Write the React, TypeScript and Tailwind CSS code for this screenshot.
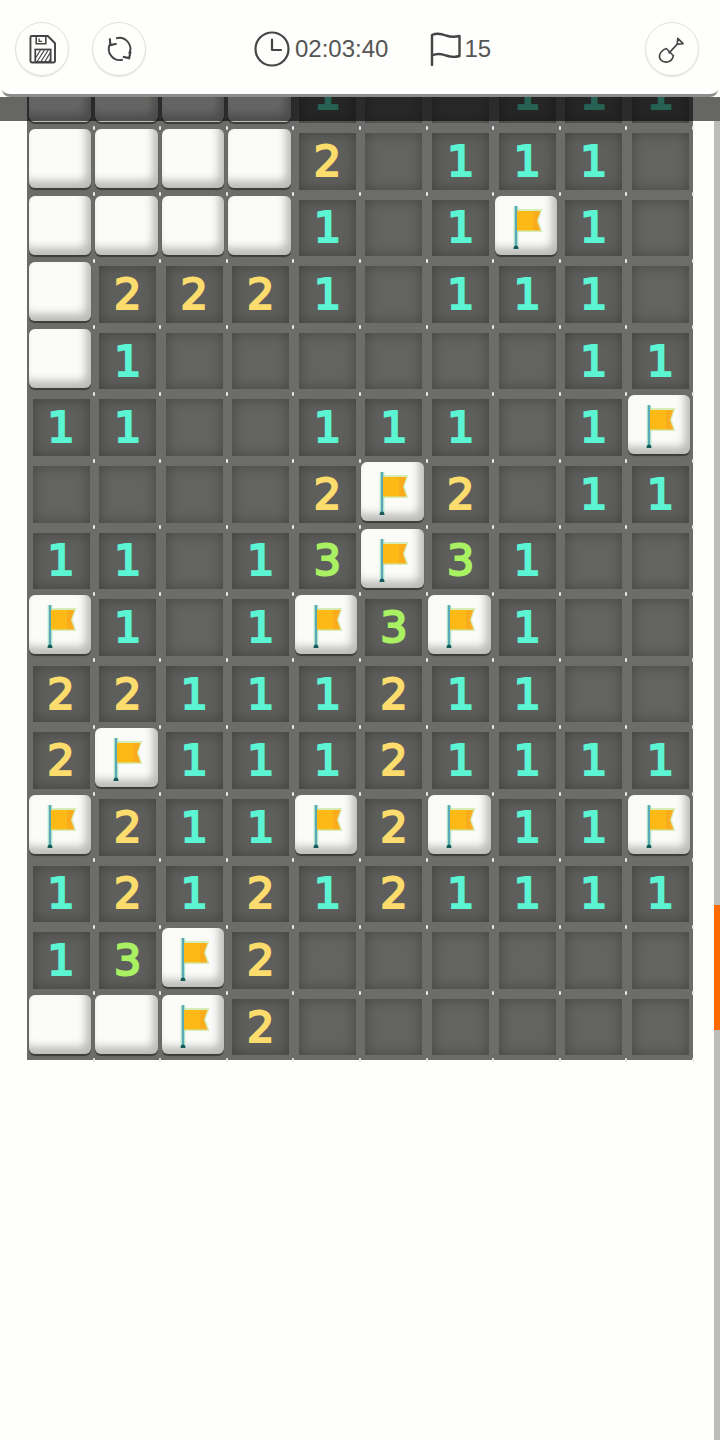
const board = [
  "WWWW1..111",
  "WWWW2.111.",
  "WWWW1.1F1.",
  "W2221.111.",
  "W1......11",
  "11..111.1F",
  "....2F2.11",
  "11.13F31..",
  "F1.1F3F1..",
  "22111211..",
  "2F11121111",
  "F211F2F11F",
  "1212121111",
  "13F2......",
  "WWF2......",
];

function Flag() {
  return (
    <svg width="62" height="62" viewBox="0 0 62 62" className="block">
      <path d="M21 14h25l-3.500 10.500 3.500 10.500H21z" fill="none" stroke="#cdeaa6" strokeWidth="2" opacity="0.8" />
      <line x1="21" y1="10" x2="21" y2="53" stroke="#b6ecc6" strokeWidth="5" opacity="0.7" />
      <line x1="21" y1="10" x2="21" y2="53" stroke="#5aa8b4" strokeWidth="2.400" />
      <path d="M22 15h16v19.500H22z" fill="#fdba16" />
      <path d="M38 15h7.500l-3.500 9.750 3.500 9.750H38z" fill="#f9ac1c" />
      <path d="M18.500 53c0-2.500 1-3.500 2.500-3.500s2.500 1 2.500 3.500z" fill="#175a5a" />
    </svg>
  );
}

function Cell({ v }: { v: string }) {
  const isTile = v === "W" || v === "F";
  const color =
    v === "1" ? "text-[#5cf5d3]" : v === "2" ? "text-[#fbdc6c]" : "text-[#a9f163]";
  return (
    <div className="relative">
      {isTile ? (
        <div className="absolute top-[1.5px] left-[1.5px] w-[62.5px] h-[59px] rounded-[6px] bg-[#fbfbf9] shadow-[inset_-5px_-7px_9px_rgba(0,0,0,0.26),0_2px_1px_rgba(0,0,0,0.45)] overflow-hidden">
          {v === "F" && <Flag />}
        </div>
      ) : v === "." ? (
        <div className="absolute top-[5.5px] left-[5.5px] w-[57px] h-[56.5px] bg-[#636362] shadow-[inset_0_0_14px_rgba(0,0,0,0.3)]" />
      ) : (
        <div className="absolute top-[5.5px] left-[5.5px] w-[57px] h-[56.5px] flex items-center justify-center bg-[#5e5e5d] shadow-[inset_0_0_14px_rgba(0,0,0,0.32)]">
          <span
            className={`font-['DejaVu_Sans',sans-serif] text-[43px] leading-none [-webkit-text-stroke:2.2px_currentColor] ${color}`}
          >
            {v}
          </span>
        </div>
      )}
      <span className="absolute -right-[1px] -bottom-[2px] w-[2px] h-[4px] bg-[#e8e8e8] rounded-full z-[1]" />
    </div>
  );
}

export default function App() {
  return (
    <div className="relative h-[1440px] w-[720px] overflow-hidden bg-[#fefefc] font-['Liberation_Sans',sans-serif]">
      <header className="relative z-20 mx-[2px] h-[97px] flex items-center pt-[3px] bg-[#fefefc] rounded-b-[8px] border-b-[3px] border-[#8c8c8c] text-[#555555]">
        <div className="ml-[13px] flex gap-[23px]">
          <button className="w-[54px] h-[54px] rounded-full border border-[#e0e0de] shadow-[0_1px_1px_rgba(0,0,0,0.12)] flex items-center justify-center">
            <svg width="54" height="54" viewBox="0 0 54 54" fill="none" stroke="#444" strokeWidth="1.6">
              <path d="M15 15a1.500 1.500 0 0 1 1.500-1.500H33l7.500 7.500v18.500a1.500 1.500 0 0 1-1.500 1.500H16.500a1.500 1.500 0 0 1-1.500-1.500z" strokeWidth="2" />
              <path d="M21 14v7.500h10V14" />
              <path d="M24 16v3h3" strokeWidth="1.300" />
              <rect x="20" y="27.500" width="16" height="13" strokeWidth="1.800" />
              <path d="M20.500 36l5-8M22 40l7.500-12M26 40l7.500-12M30 40l5.500-9M34 40l2-3" strokeWidth="1.200" />
            </svg>
          </button>
          <button className="w-[54px] h-[54px] rounded-full border border-[#e0e0de] shadow-[0_1px_1px_rgba(0,0,0,0.12)] flex items-center justify-center">
            <svg width="54" height="54" viewBox="0 0 54 54" fill="none" stroke="#444" strokeWidth="2">
              <path d="M17.500 22A11.500 11.500 0 0 0 31 38" />
              <path d="M24 15.800A11.500 11.500 0 0 1 37.500 32" />
              <path d="M17.500 16l.5 7 6.500-1.500" strokeWidth="2.200" />
              <path d="M39 29.500l-1.500 7-6.500-1.500" strokeWidth="2.200" />
            </svg>
          </button>
        </div>
        <div className="ml-[108px] flex items-center">
          <svg width="36" height="36" viewBox="0 0 36 36" fill="none" stroke="#444" strokeWidth="2.200" strokeLinecap="round" strokeLinejoin="round">
            <circle cx="18" cy="18" r="16.500" />
            <path d="M18 8.500V19h9" />
          </svg>
          <span className="ml-[5px] text-[24px] leading-none">02:03:40</span>
          <svg className="ml-[42px]" width="32" height="34" viewBox="0 0 32 34" fill="none" stroke="#444" strokeWidth="2.400" strokeLinecap="round" strokeLinejoin="round">
            <path d="M2 33V3c5-2.500 9-1.500 14 .5 4.500 1.500 8 2 13.500.5v20c-5 1.500-9 1-13.500-.5-5-2-9-2.500-14 0" />
          </svg>
          <span className="ml-[2px] text-[24px] leading-none">15</span>
        </div>
        <button className="ml-auto mr-[19px] w-[54px] h-[54px] rounded-full border border-[#e0e0de] shadow-[0_1px_1px_rgba(0,0,0,0.12)] flex items-center justify-center">
          <svg width="54" height="54" viewBox="0 0 54 54" fill="none" stroke="#444" strokeWidth="1.700" strokeLinejoin="round">
            <path d="M32.500 21.500l.5-5.500 5.500 5.500-5.500.5z" />
            <path d="M32.500 22L23.500 31.500" />
            <path d="M21 26.500l7.500 7.500c-1 3.500-3 6-6 6.500-3 .5-6-.5-7.500-2.500-1.500-2.500-1-5.500.5-7.500 1.500-2 3.500-3.500 5.500-4z" />
          </svg>
        </button>
      </header>

      <main className="-mt-[36px] ml-[27px] w-[666px] grid grid-cols-10 auto-rows-[66.6px] bg-[#6c6c6b]">
        {board.flatMap((row, r) =>
          row.split("").map((v, c) => <Cell key={`${r}-${c}`} v={v} />)
        )}
      </main>

      <div className="absolute right-0 top-[121px] bottom-0 w-[6px] bg-[#bcbcbb]">
        <div className="mt-[784px] h-[125px] bg-[#ff6a00]" />
      </div>
      <div className="absolute z-10 left-0 right-0 top-[97px] h-[24px] bg-black/60" />
    </div>
  );
}
